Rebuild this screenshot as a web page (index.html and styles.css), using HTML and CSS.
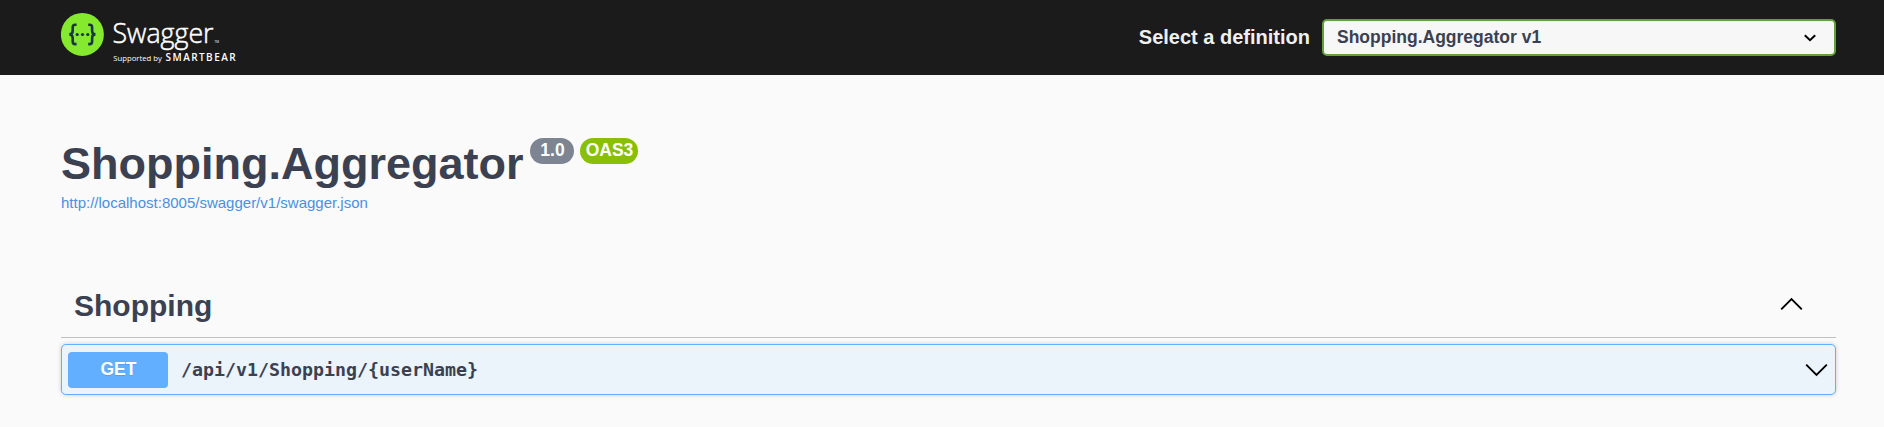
FILE: index.html
```html
<!DOCTYPE html>
<html lang="en">
<head>
<meta charset="utf-8">
<title>Swagger UI</title>
<link rel="stylesheet" href="styles.css">
</head>
<body>
<header class="topbar">
  <a class="logo">
    <svg width="190" height="75" viewBox="0 0 190 75">
      <circle cx="21.4" cy="34.4" r="21.5" fill="#85ea2d"/>
      <g fill="none" stroke="#173647" stroke-width="2.6">
        <path d="M15.6 24.7h-1.4q-2.5 0-2.5 2.6v3.4q0 3.7-3.4 3.7q3.4 0 3.4 3.7v3.4q0 2.6 2.5 2.6h1.4"/>
        <path d="M27.2 24.7h1.4q2.5 0 2.5 2.6v3.4q0 3.7 3.4 3.7q-3.4 0-3.4 3.7v3.4q0 2.6-2.5 2.6h-1.4"/>
      </g>
      <g fill="#173647"><circle cx="16.2" cy="34.5" r="1.6"/><circle cx="21.5" cy="34.5" r="1.6"/><circle cx="26.8" cy="34.5" r="1.6"/></g>
      <text class="logo-name" x="51.5" y="43.3" textLength="101" lengthAdjust="spacingAndGlyphs">Swagger</text>
      <text class="logo-tm" x="153.5" y="43.3">TM</text>
      <text class="logo-by" x="52.3" y="61" textLength="48.5" lengthAdjust="spacingAndGlyphs">Supported by</text>
      <text class="logo-brand" x="104.6" y="61" textLength="71">SMARTBEAR</text>
    </svg>
  </a>
  <label class="definition">
    <span class="definition-label">Select a definition</span>
    <span class="select">
      <span>Shopping.Aggregator v1</span>
      <svg width="12" height="8" viewBox="0 0 12 8"><path d="M.8 1.2L6 6.2l5.2-5" fill="none" stroke="#000" stroke-width="2"/></svg>
    </span>
  </label>
</header>
<main class="wrapper">
  <section class="info">
    <div class="title-row">
      <h1 class="title">Shopping.Aggregator</h1>
      <span class="badge version">1.0</span>
      <span class="badge oas">OAS3</span>
    </div>
    <a class="spec-link">http://localhost:8005/swagger/v1/swagger.json</a>
  </section>
  <section>
    <div class="tag">
      <h2 class="tag-name">Shopping</h2>
      <svg class="tag-arrow" width="23" height="14" viewBox="0 0 23 14"><path d="M1.2 12.4L11.5 2l10.3 10.4" fill="none" stroke="#000" stroke-width="1.9"/></svg>
    </div>
    <div class="operation">
      <span class="method">GET</span>
      <span class="path">/api/v1/Shopping/{userName}</span>
      <svg width="23" height="14" viewBox="0 0 23 14"><path d="M1.2 1.6L11.5 12l10.3-10.4" fill="none" stroke="#000" stroke-width="1.9"/></svg>
    </div>
  </section>
</main>
</body>
</html>
```
FILE: styles.css
```css
* { box-sizing: border-box; }
body {
  margin: 0;
  height: 427px;
  overflow: hidden;
  background: #fafafa;
  color: #3b4151;
  font-family: "Liberation Sans", Arial, sans-serif;
}
svg { display: block; flex: none; }
.topbar {
  height: 75px;
  padding: 0 48px 0 61px;
  background: #1b1b1b;
  display: flex;
  justify-content: space-between;
}
.logo-name { font: 300 27px "Open Sans", sans-serif; fill: #fff; stroke: #fff; stroke-width: .5px; }
.logo-tm { font: 3px "Open Sans", sans-serif; fill: #fff; }
.logo-by { font: 8px "Open Sans", sans-serif; fill: #fff; }
.logo-brand { font: 600 10px "Open Sans", sans-serif; fill: #fff; letter-spacing: 1px; }
.definition { display: flex; align-items: center; gap: 12px; }
.definition-label { padding-bottom: 2px; color: #f0f0f0; font-size: 20px; font-weight: 700; line-height: 24px; }
.select {
  width: 514px;
  height: 37px;
  padding: 0 18px 0 13px;
  border: 2px solid #62a03f;
  border-radius: 5px;
  background: #f7f7f7;
  display: flex;
  align-items: center;
  justify-content: space-between;
  font-size: 17.5px;
  font-weight: 700;
}
.wrapper { padding: 0 48px 0 61px; }
.info { padding-top: 63px; height: 200px; }
.title-row { display: flex; align-items: flex-start; height: 55px; }
.title { margin: 0 7px 0 0; font-size: 45px; line-height: 51px; }
.badge {
  height: 26px;
  border-radius: 13px;
  color: #fff;
  font-size: 17.5px;
  font-weight: 700;
  line-height: 24px;
  text-align: center;
}
.version { width: 44px; margin-right: 6px; background: #7d8492; }
.oas { width: 58px; background: #89bf04; }
.spec-link { display: block; color: #4990e2; font-size: 15px; line-height: 20px; }
.tag {
  height: 63px;
  padding: 0 33px 1px 13px;
  border-bottom: 1px solid #bfc1c4;
  display: flex;
  align-items: center;
  justify-content: space-between;
}
.tag-name { margin: 0; font-size: 30px; line-height: 34px; }
.tag-arrow { margin-bottom: 3px; }
.operation {
  height: 51px;
  margin-top: 6px;
  padding: 0 7px 0 6px;
  border: 1px solid #61affe;
  border-radius: 5px;
  background: #ebf3fb;
  box-shadow: 0 0 4px rgba(0, 0, 0, .19);
  display: flex;
  align-items: center;
}
.method {
  width: 100px;
  height: 36px;
  padding-left: 1px;
  border-radius: 4px;
  background: #61affe;
  color: #fff;
  font-size: 17.5px;
  font-weight: 700;
  line-height: 34px;
  text-align: center;
  text-shadow: 0 1px 0 rgba(0, 0, 0, .1);
}
.path {
  flex: 1;
  padding-left: 13px;
  font: 700 18.27px/24px "DejaVu Sans Mono", monospace;
}
```
